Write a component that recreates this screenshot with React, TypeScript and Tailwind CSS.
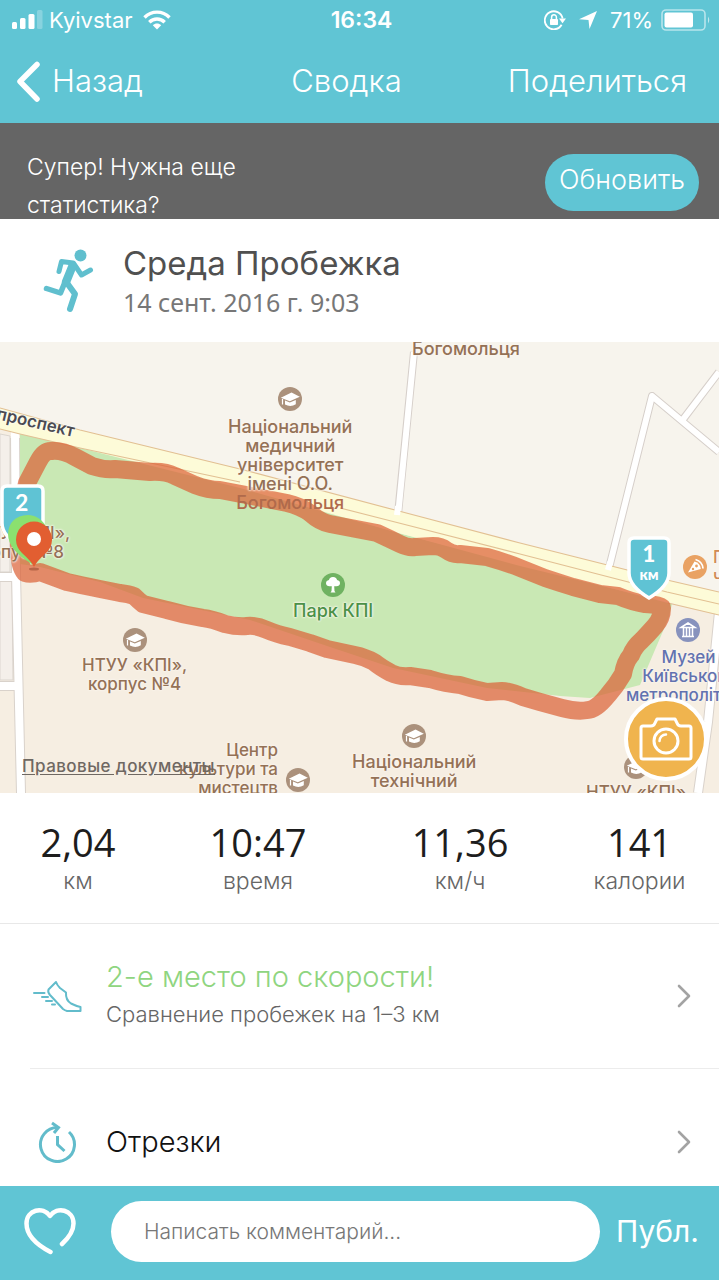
import type { ReactNode } from "react";

const halo = "[text-shadow:0_0_2px_#fbf6ef,0_0_2px_#fbf6ef,0_0_3px_#fbf6ef]";

function SignalIcon() {
  return (
    <svg width="31" height="20" viewBox="0 0 31 20" fill="#fff" aria-hidden="true">
      <rect x="0" y="12" width="5" height="7" rx="1.5" />
      <rect x="8" y="8" width="5.500" height="11" rx="1.500" />
      <rect x="16.500" y="4" width="6" height="15" rx="1.500" />
      <rect x="25" y="0" width="5.500" height="19" rx="1.500" opacity=".25" />
    </svg>
  );
}

function WifiIcon() {
  return (
    <svg width="28" height="20" viewBox="0 0 28 20" fill="none" stroke="#fff" strokeWidth="3.400" aria-hidden="true">
      <path d="M1.500 7.500C8.500.300 19.500.300 26.500 7.500" />
      <path d="M6.300 12.200C10.600 7.900 17.400 7.900 21.700 12.200" />
      <path d="M9.800 15.300C12.200 13 15.800 13 18.200 15.300L14 19.600Z" fill="#fff" stroke="none" />
    </svg>
  );
}

function RotationLockIcon() {
  return (
    <svg width="22" height="20" viewBox="0 0 22 20" fill="none" stroke="#fff" strokeWidth="1.800" aria-hidden="true">
      <path d="M17.600 14.800A9 9 0 1 1 18.600 8.500" />
      <path d="M15 8.600h7l-3.500 4.600z" fill="#fff" stroke="none" />
      <rect x="6" y="9" width="8" height="6" rx=".8" fill="#fff" stroke="none" />
      <path d="M7.600 9V7.200a2.400 2.400 0 0 1 4.800 0V9" strokeWidth="1.500" />
    </svg>
  );
}

function StatusBar() {
  return (
    <div className="flex h-10 items-center justify-between pl-3 pr-2 text-[22px] leading-7">
      <div className="flex flex-1 items-center gap-1.5">
        <SignalIcon />
        <span>Kyivstar</span>
        <span className="ml-1">
          <WifiIcon />
        </span>
      </div>
      <span className="text-[23px] font-semibold">16:34</span>
      <div className="flex flex-1 items-center justify-end gap-2">
        <RotationLockIcon />
        <svg className="ml-1" width="20" height="20" viewBox="0 0 20 20" fill="#fff" aria-hidden="true">
          <path d="M19 1 11.500 19 10.500 10 1 9.300Z" />
        </svg>
        <span className="ml-1">71%</span>
        <svg width="50" height="22" viewBox="0 0 50 22" fill="none" aria-hidden="true">
          <rect x="1" y="1" width="43" height="20" rx="4" stroke="#fff" strokeOpacity=".55" strokeWidth="1.600" />
          <rect x="3.500" y="3.500" width="28.500" height="15" rx="2" fill="#fff" />
          <path d="M47 7.500q2.500 3.500 0 7z" fill="#fff" fillOpacity=".6" />
        </svg>
      </div>
    </div>
  );
}

function Header() {
  return (
    <header className="bg-[#60c5d4] text-white">
      <StatusBar />
      <nav className="grid h-[83px] grid-cols-[1fr_auto_1fr] items-center pl-4 pr-8 text-[31px] font-light">
        <button className="flex items-center gap-3 justify-self-start">
          <svg width="24" height="42" viewBox="0 0 24 42" fill="none" stroke="#fff" strokeWidth="5.500" strokeLinecap="round" strokeLinejoin="round" aria-hidden="true">
            <path d="M21 3.500 4 20.500 21 38" />
          </svg>
          Назад
        </button>
        <h1 className="pr-2.5">Сводка</h1>
        <button className="justify-self-end">Поделиться</button>
      </nav>
    </header>
  );
}

function Runner() {
  return (
    <svg width="52" height="64" viewBox="0 0 52 64" fill="none" stroke="#60bfce" strokeLinecap="round" strokeLinejoin="round" aria-hidden="true">
      <circle cx="37.500" cy="6.500" r="6" fill="#60bfce" stroke="none" />
      <path d="M16 22.500 18.500 12.500 30 14" strokeWidth="5" />
      <path d="M31 15 38.500 26 47.500 21" strokeWidth="5" />
      <path d="M29.500 17 23 33" strokeWidth="8.500" />
      <path d="M22 33 17.500 44 3.500 39.500" strokeWidth="5.500" />
      <path d="M24 34 32 45 27 60" strokeWidth="6" />
    </svg>
  );
}

function Cap({ className = "" }: { className?: string }) {
  return (
    <svg className={`shrink-0 ${className}`} width="24" height="24" viewBox="0 0 24 24" aria-hidden="true">
      <circle cx="12" cy="12" r="12" fill="#ab917c" />
      <path d="M2.800 10.800 13.500 5.500 21.800 9.800 11.800 14.200Z" fill="#fff" />
      <path d="M7 13.500 11.800 15.600 17.800 13V17.300Q12.500 20.500 7 17.500Z" fill="#fff" />
      <path d="M4.500 12V17.500" stroke="#fff" strokeWidth="1.200" />
    </svg>
  );
}

function Place({ className, children }: { className: string; children: ReactNode }) {
  return (
    <div className={`absolute flex flex-col items-center text-center font-medium leading-[19px] whitespace-nowrap ${halo} ${className}`}>
      {children}
    </div>
  );
}

const route =
  "M25 231C17 222 16 190 27 141L38 120Q44 108 52 109Q62 108 75 115L92 124Q104 128 115 127L150 130Q165 129 175 134L195 143Q208 148 220 148L262 156L287 161Q300 164 310 171Q320 180 330 182L377 191Q390 197 400 202Q408 206 415 205L433 204Q441 204 446 208Q453 213 460 212L487 215Q505 220 520 226L545 236Q560 241 573 245L600 252L618 254Q632 260 645 262Q662 263 662 266Q662 276 655 284Q648 292 642 298Q634 305 631 313Q625 320 623 332Q616 344 608 353Q596 368 588 368Q577 370 562 366L540 360L523 355Q510 349 502 349L487 350Q472 347 460 343Q446 342 430 337L410 334Q399 335 391 331Q380 325 374 320Q365 315 355 313L327 307L310 301L290 295Q276 292 267 288Q256 283 247 284Q237 285 225 282Q212 277 203 276Q184 273 167 268L143 262Q139 259 134 254Q129 252 120 251L100 247Q80 243 67 240L40 230Q31 233 25 231Z";

function MapArtwork() {
  return (
    <svg className="absolute left-0 top-0" width="719" height="451" viewBox="0 0 719 451" fill="none" aria-hidden="true">
      <rect width="719" height="451" fill="#f7f4ed" />
      <path d="M0 86 80 105 240 145 719 272V451H0Z" fill="#f6eee2" />
      <path d="M0 92 10 94V230H0ZM0 237H12L13 338H0Z" fill="#f4efea" stroke="#dbd5cf" strokeWidth="1" />
      <g strokeLinejoin="round">
        <path d="M414 10 398 172M608 230 652 54 719 110M681 80 719 30" stroke="#d6cfca" strokeWidth="8" />
        <path d="M414 10 398 174M608 230 652 54 719 110M681 80 719 30" stroke="#fff" strokeWidth="6" />
      </g>
      <path d="M15 96 16 232 21 451M0 235H14M0 344H16" stroke="#d9d2cb" strokeWidth="10" />
      <path d="M15 90 16 232 21 451M0 235H16M0 344H18" stroke="#fff" strokeWidth="8" />
      <path d="M719 270 708 380 698 451" stroke="#d9d2cb" strokeWidth="10" />
      <path d="M719 270 708 380 698 451" stroke="#fff" strokeWidth="8" />
      <path d="M20 92 80 105 240 144 395 190 672 262 669 275 640 343 590 356 560 354 487 346 393 326 327 304 250 278 143 256 100 240 40 225 20 222Z" fill="#c9e8b4" />
      <path d="M0 66 80 88 240 127 395 168 520 201 667 238 719 250V273L672 261 520 224 395 190 240 146 80 106 0 87Z" fill="#fdfbd8" />
      <path d="M0 66 80 88 240 127 395 168 520 201 667 238 719 250M0 87 20 92 80 106 240 140M340 166 395 180 520 212 667 250 719 262M719 273 668 261" stroke="#e2c093" strokeWidth="1.200" />
      <path d="M398 164 397 173M610 220 608 228" stroke="#fff" strokeWidth="6" />
      <path d={route} stroke="#dc6034" strokeOpacity=".7" strokeWidth="18" strokeLinejoin="round" />
    </svg>
  );
}

function TrackMap() {
  return (
    <section aria-label="Карта" className="relative h-[451px] overflow-hidden text-[17px] text-[#947156]">
      <MapArtwork />
      <span className="absolute -left-1 top-[70px] rotate-[13deg] text-[17px] font-semibold leading-5 text-[#4b4b52] [text-shadow:0_0_2px_#fff,0_0_2px_#fff]">
        проспект
      </span>
      <Place className="left-[412px] top-[-3px] text-[18px]">Богомольця</Place>
      <Place className="left-[228px] top-[45px] text-[18px]">
        <Cap />
        <span className="mt-1.5">
          Національний
          <br />
          медичний
          <br />
          університет
          <br />
          імені О.О.
          <br />
          <span className="text-[#b06a4b] [text-shadow:none]">Богомольця</span>
        </span>
      </Place>
      <Place className="left-[293px] top-[231px] text-[18px] text-[#4b9147]">
        <svg width="24" height="24" viewBox="0 0 24 24" aria-hidden="true">
          <circle cx="12" cy="12" r="12" fill="#6fb261" />
          <path d="M12 4c2.500 0 4 1.500 4 3 2 .3 3 1.600 3 3.200 0 2-1.600 3-3.500 3H13.200L13.500 18 14.500 19.500H9.500L10.500 18 10.800 13.200H8.500C6.500 13.200 5 12 5 10.200 5 8.600 6.200 7.300 8 7 8 5.500 9.500 4 12 4Z" fill="#fff" />
        </svg>
        <span className="mt-1">Парк КПІ</span>
      </Place>
      <Place className="left-[82px] top-[286px]">
        <Cap />
        <span className="mt-1">
          НТУУ «КПІ»,
          <br />
          корпус №4
        </span>
      </Place>
      <Place className="left-[352px] top-[382px] text-[18px]">
        <Cap />
        <span className="mt-1">
          Національний
          <br />
          технічний
        </span>
      </Place>
      <div className={`absolute left-[179px] top-[399px] flex items-center gap-2 text-right font-medium leading-[19px] ${halo}`}>
        <span>
          Центр
          <br />
          культури та
          <br />
          мистецтв
        </span>
        <Cap className="mt-5" />
      </div>
      <Place className="left-[586px] top-[413px]">
        <Cap />
        <span className="mt-1">НТУУ «КПІ»</span>
      </Place>
      <Place className="left-[626px] top-[276px] text-[#6272b0]">
        <svg width="24" height="24" viewBox="0 0 24 24" fill="none" stroke="#fff" strokeWidth="1.500" aria-hidden="true">
          <circle cx="12" cy="12" r="12" fill="#8792bd" stroke="none" />
          <path d="M5 9.500 12 5 19 9.500ZM6 18.500H18M7.500 10V18M10.500 10V18M13.500 10V18M16.500 10V18" />
        </svg>
        <span className="mt-1.5">
          Музей
          <br />
          Київського
          <br />
          метрополітену
        </span>
      </Place>
      <div className={`absolute left-[683px] top-[206px] flex items-center gap-1.5 font-medium leading-[19px] text-[#d08a55] ${halo}`}>
        <svg className="shrink-0" width="24" height="24" viewBox="0 0 24 24" aria-hidden="true">
          <circle cx="12" cy="12" r="12" fill="#e9a263" />
          <path d="M5 17.500 11.500 6.500Q17.500 8 17.800 14Z" fill="#fff" />
          <path d="M12.500 4.500Q19.500 6.500 20 13.500" fill="none" stroke="#fff" strokeWidth="1.800" />
          <circle cx="10" cy="14" r="1.200" fill="#e9a263" />
          <circle cx="13.500" cy="11" r="1.400" fill="#e9a263" />
        </svg>
        <span>
          П<br />ч
        </span>
      </div>
      <Place className="left-[-35px] top-[182px]">
        <span>НТУУ «КПІ»,</span>
        <span>корпус №8</span>
      </Place>

      <a href="#legal" className="absolute left-[22px] top-[414px] font-medium leading-5 tracking-wide text-[#6f6862] underline underline-offset-2">
        Правовые документы
      </a>

      <div className="absolute left-[627px] top-[194px] h-[66px] w-[44px] text-white">
        <svg className="absolute inset-0" width="44" height="66" viewBox="0 0 44 66" aria-hidden="true">
          <path d="M2 7Q2 2 7 2H37Q42 2 42 7V37Q42 50 22 62Q2 50 2 37Z" fill="#5fc3d4" stroke="#fff" strokeWidth="3.500" />
        </svg>
        <p className="relative flex flex-col items-center pt-1.5 font-[Lato] text-[15px] font-black leading-4">
          <span className="text-[22px] leading-6">1</span>
          км
        </p>
      </div>
      <div className="absolute left-0 top-[140px] h-[90px] w-[56px] text-white">
        <svg className="absolute inset-0" width="56" height="90" viewBox="0 0 56 90" aria-hidden="true">
          <path d="M2 9Q2 4 7 4H38Q43 4 43 9V41Q43 55 22 64Q2 55 2 41Z" fill="#5fc3d4" stroke="#fff" strokeWidth="3.500" />
          <path d="M28 33a20 19 0 0 1 17 28L32 82Q8 68 8 52 9 34 28 33Z" fill="#8be06f" />
          <ellipse cx="34" cy="87" rx="5" ry="1.500" fill="#a4553a" opacity=".7" />
          <path d="M34 85Q32 80 22 71A18 18 0 1 1 46 71Q36 80 34 85Z" fill="#e25e31" />
          <circle cx="34" cy="57" r="7" fill="#fff" />
        </svg>
        <span className="absolute left-[15px] top-2 font-[Lato] text-[23px] font-bold leading-6">2</span>
      </div>

      <button aria-label="Добавить фото" className="absolute left-[624px] top-[355px] flex size-[84px] items-center justify-center rounded-full border-4 border-white bg-[#f0b44e]">
        <svg width="54" height="46" viewBox="0 0 54 46" fill="none" stroke="#fff" strokeWidth="3" strokeLinejoin="round" aria-hidden="true">
          <path d="M4 10H12Q15 10 16 7L18 3H36L38 7Q39 10 42 10H50Q52 10 52 12V41Q52 43 50 43H4Q2 43 2 41V12Q2 10 4 10Z" />
          <circle cx="27" cy="25" r="12" />
          <path d="M20.500 25a6.500 6.500 0 0 1 6.500-6.500" strokeWidth="2.500" strokeLinecap="round" />
        </svg>
      </button>
    </section>
  );
}

const stats = [
  { value: "2,04", label: "км" },
  { value: "10:47", label: "время" },
  { value: "11,36", label: "км/ч" },
  { value: "141", label: "калории" },
];

function Chevron() {
  return (
    <svg width="14" height="24" viewBox="0 0 14 24" fill="none" stroke="#a3a3a3" strokeWidth="2.600" strokeLinecap="round" strokeLinejoin="round" aria-hidden="true">
      <path d="M2 2 12 12 2 22" />
    </svg>
  );
}

export default function App() {
  return (
    <div className="flex min-h-screen flex-col bg-white font-[Inter,sans-serif]">
      <Header />
      <section className="flex h-24 items-start justify-between overflow-hidden bg-[#656565] pl-[27px] pr-5 text-white">
        <p className="w-64 pt-[25px] text-[23px] font-light leading-[38px]">Супер! Нужна еще статистика?</p>
        <button className="mt-[31px] h-[57px] rounded-full bg-[#60c5d4] px-3.5 pb-1 text-[27px] font-light">Обновить</button>
      </section>
      <section className="flex h-[123px] items-center gap-7 pl-[43px]">
        <Runner />
        <div>
          <h2 className="text-[33px] leading-[42px] text-[#505050]">Среда Пробежка</h2>
          <p className="font-['Noto_Sans'] text-[25px] leading-9 text-[#777]">14 сент. 2016 г. 9:03</p>
        </div>
      </section>
      <TrackMap />
      <dl className="grid h-[131px] grid-cols-[156fr_204fr_200fr_159fr] content-center border-b border-[#e8e8e8] text-center">
        {stats.map((s) => (
          <div key={s.label} className="flex flex-col-reverse">
            <dt className="text-[23px] font-light leading-8 text-[#666]">{s.label}</dt>
            <dd className="font-['Open_Sans'] text-[38px] font-medium leading-[46px] text-[#1d1d1d]">{s.value}</dd>
          </div>
        ))}
      </dl>
      <main className="flex grow flex-col">
        <a href="#compare" className="ml-[30px] flex h-[145px] items-center border-b border-[#ececec] pr-7">
          <svg className="mr-6 shrink-0" width="52" height="34" viewBox="0 0 52 34" fill="none" stroke="#62bccb" strokeWidth="2" strokeLinecap="round" strokeLinejoin="round" aria-hidden="true">
            <path d="M18.500 10.500 26 3Q27 6 30 9Q34 12 36 13.500Q35.500 21 41 24.500Q46 27 50.500 28V32H37Q35 31.500 33 30L20 16Q17.500 13 18.500 10.500Z" />
            <path d="M4 14H14.500M12 18H18M16 22H22M22 25.500H25" />
          </svg>
          <span className="grow pb-0.5">
            <span className="block text-[29px] font-light leading-[38px] text-[#8fd580]">2-е место по скорости!</span>
            <span className="block text-[22px] font-light leading-9 text-[#666]">Сравнение пробежек на 1–3 км</span>
          </span>
          <Chevron />
        </a>
        <a href="#splits" className="ml-[30px] flex h-[117px] items-center pr-7 pt-[29px]">
          <svg className="ml-2 mr-7 shrink-0" width="40" height="42" viewBox="0 0 40 42" fill="none" stroke="#62bccb" strokeWidth="3" aria-hidden="true">
            <path d="M31 11A17 17 0 1 1 20 6.500" />
            <path d="M14 2 20.500 6.500 16 12" />
            <path d="M19.500 15V23.500L26.500 30" />
          </svg>
          <span className="grow text-[29px] font-light text-[#111]">Отрезки</span>
          <Chevron />
        </a>
      </main>
      <footer className="sticky bottom-0 flex h-[94px] items-center bg-[#60c5d4] pb-1 pl-6 pr-5 text-white">
        <button aria-label="Нравится" className="mr-[35px] shrink-0">
          <svg width="52" height="48" viewBox="0 0 52 48" fill="none" stroke="#fff" strokeWidth="4.500" strokeLinecap="round" strokeLinejoin="round" aria-hidden="true">
            <path d="M26.500 45C15 39 2.500 29 2.500 16.500C2.500 2.500 19 -1 26 9C33 -1 49.500 2.500 49.500 16.500C49.500 24 44.500 31 38 37" />
          </svg>
        </button>
        <input
          type="text"
          aria-label="Написать комментарий"
          placeholder="Написать комментарий..."
          className="h-[61px] min-w-0 grow rounded-full bg-white px-[33px] text-[21px] font-light text-[#333] outline-none placeholder:text-[#777]"
        />
        <button className="ml-4 text-[30px]">Публ.</button>
      </footer>
    </div>
  );
}
